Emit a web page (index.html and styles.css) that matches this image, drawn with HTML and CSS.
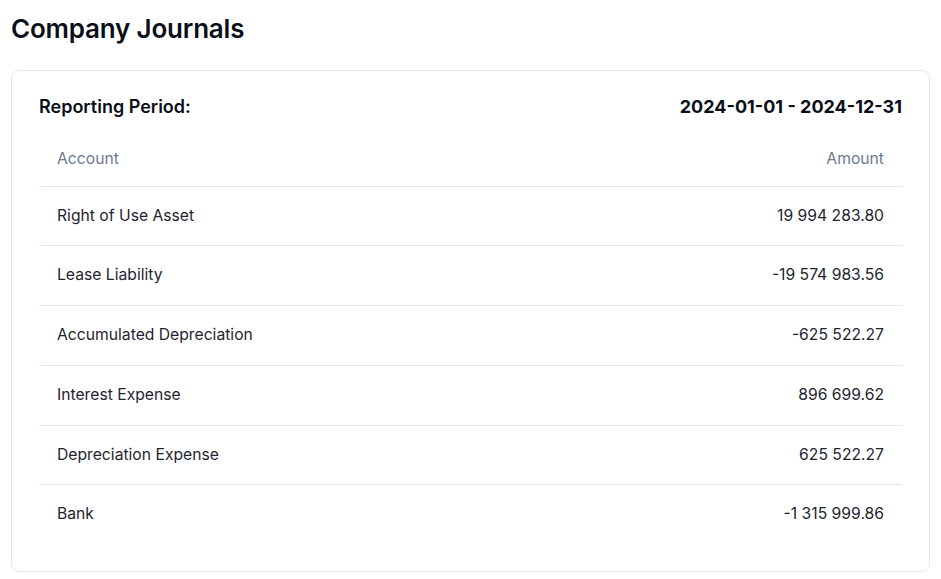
FILE: index.html
```html
<!DOCTYPE html>
<html>
<head>
<meta charset="utf-8">
<link rel="stylesheet" href="styles.css">
</head>
<body>
<div class="page">
  <h1 class="title">Company Journals</h1>
  <div class="card">
    <div class="period">
      <span class="period-label">Reporting Period:</span>
      <span class="period-value">2024-01-01 - 2024-12-31</span>
    </div>
    <table class="journal">
      <thead>
        <tr><th class="left">Account</th><th class="right">Amount</th></tr>
      </thead>
      <tbody>
        <tr><td class="left">Right of Use Asset</td><td class="right">19 994 283.80</td></tr>
        <tr><td class="left">Lease Liability</td><td class="right">-19 574 983.56</td></tr>
        <tr><td class="left">Accumulated Depreciation</td><td class="right">-625 522.27</td></tr>
        <tr><td class="left">Interest Expense</td><td class="right">896 699.62</td></tr>
        <tr><td class="left">Depreciation Expense</td><td class="right">625 522.27</td></tr>
        <tr><td class="left">Bank</td><td class="right">-1 315 999.86</td></tr>
      </tbody>
    </table>
  </div>
</div>
</body>
</html>
```

FILE: styles.css
```css
* { box-sizing: border-box; }
html, body { margin: 0; padding: 0; background: #fff; }
body {
  font-family: Inter, "Noto Sans", sans-serif;
  color: #111827;
}
.page {
  padding: 11px 11px;
}
.title {
  margin: 0;
  font-size: 26px;
  font-weight: 600;
  line-height: 36px;
  color: #0b0f19;
  letter-spacing: -0.2px;
}
.card {
  margin-top: 23px;
  border: 1px solid #e2e8f0;
  border-radius: 8px;
  padding: 20px 27px 27px 27px;
}
.period {
  display: flex;
  justify-content: space-between;
  align-items: center;
  height: 30px;
}
.period-label {
  font-size: 18px;
  font-weight: 600;
  color: #0b0f19;
}
.period-value {
  font-size: 18px;
  font-weight: 700;
  color: #0b0f19;
}
.journal {
  width: 100%;
  border-collapse: collapse;
  margin-top: 6px;
}
.journal th, .journal td {
  padding: 18px 18px;
  font-size: 15.7px;
  line-height: 22.7px;
}
.journal th {
  font-weight: 400;
  color: #6b7a90;
  padding-top: 21px;
  padding-bottom: 15px;
  border-bottom: 1px solid #e2e8f0;
}
.journal td {
  color: #1f2430;
  border-bottom: 1px solid #e2e8f0;
}
.journal tbody tr:last-child td { border-bottom: none; }
.left { text-align: left; }
.right { text-align: right; }
```
